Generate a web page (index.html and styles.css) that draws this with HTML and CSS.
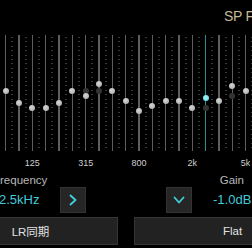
FILE: index.html
```html
<!DOCTYPE html>
<html>
<head>
<meta charset="utf-8">
<link rel="stylesheet" href="styles.css">
</head>
<body>
<div class="screen">
  <header class="header"><span class="title">SP Flat</span></header>
  <div class="eq">
    <div class="band"><span class="knob" style="top:56px"></span></div>
    <div class="band"><span class="knob" style="top:68px"></span></div>
    <div class="band"><span class="knob" style="top:73px"></span></div>
    <div class="band"><span class="knob" style="top:73px"></span></div>
    <div class="band"><span class="knob" style="top:68px"></span></div>
    <div class="band"><span class="knob" style="top:56px"></span></div>
    <div class="band"><span class="ghost" style="top:56px"></span><span class="knob" style="top:61px"></span></div>
    <div class="band"><span class="ghost" style="top:56px"></span><span class="knob" style="top:49px"></span></div>
    <div class="band"><span class="knob" style="top:56px"></span></div>
    <div class="band"><span class="knob" style="top:66px"></span></div>
    <div class="band"><span class="knob" style="top:76px"></span></div>
    <div class="band"><span class="knob" style="top:71px"></span></div>
    <div class="band"><span class="knob" style="top:66px"></span></div>
    <div class="band"><span class="knob" style="top:66px"></span></div>
    <div class="band"><span class="knob" style="top:73px"></span></div>
    <div class="band selected"><span class="ghost" style="top:73px"></span><span class="knob" style="top:63px"></span></div>
    <div class="band"><span class="knob" style="top:66px"></span></div>
    <div class="band"><span class="ghost" style="top:61px"></span><span class="knob" style="top:51px"></span></div>
    <div class="band"><span class="knob" style="top:56px"></span></div>
    <div class="band"><span class="knob" style="top:60px"></span></div>
  </div>
  <div class="freqs">
    <span class="freq"></span><span class="freq"></span><span class="freq">125</span><span class="freq"></span>
    <span class="freq"></span><span class="freq"></span><span class="freq">315</span><span class="freq"></span>
    <span class="freq"></span><span class="freq"></span><span class="freq">800</span><span class="freq"></span>
    <span class="freq"></span><span class="freq"></span><span class="freq">2k</span><span class="freq"></span>
    <span class="freq"></span><span class="freq"></span><span class="freq">5k</span><span class="freq"></span>
  </div>
  <div class="params-labels">
    <span class="plabel freq-label">Frequency</span>
    <span class="plabel gain-label">Gain</span>
  </div>
  <div class="params-values">
    <span class="pvalue freq-value">2.5kHz</span>
    <button class="icon-btn next-btn" aria-label="next">
      <svg width="12" height="12" viewBox="0 0 12 12"><path d="M3.5 1.5 L8.5 6 L3.5 10.5" fill="none" stroke="#3fd0e0" stroke-width="1.8" stroke-linecap="round" stroke-linejoin="round"/></svg>
    </button>
    <button class="icon-btn down-btn" aria-label="down">
      <svg width="12" height="12" viewBox="0 0 12 12"><path d="M1.5 3.5 L6 8.5 L10.5 3.5" fill="none" stroke="#3fd0e0" stroke-width="1.8" stroke-linecap="round" stroke-linejoin="round"/></svg>
    </button>
    <span class="pvalue gain-value">-1.0dB</span>
  </div>
  <div class="actions">
    <button class="action lr">LR同期</button>
    <button class="action flat">Flat</button>
  </div>
</div>
</body>
</html>
```
FILE: styles.css
```css
html, body {
  margin: 0;
  padding: 0;
  background: #000;
}
body {
  width: 252px;
  height: 248px;
  overflow: hidden;
  font-family: "Liberation Sans", Roboto, "Noto Sans CJK JP", sans-serif;
}
.screen {
  width: 252px;
  height: 248px;
  overflow: hidden;
}
.header {
  height: 35px;
  padding-left: 224px;
  white-space: nowrap;
  box-sizing: border-box;
  padding-top: 7px;
}
.title {
  color: #c8b996;
  font-size: 14px;
  line-height: 18px;
  letter-spacing: -0.3px;
}
.eq {
  display: flex;
  height: 116px;
  margin-left: -1px;
}
.band {
  position: relative;
  flex: 0 0 13.333px;
  min-width: 0;
  height: 116px;
}
.band::before {
  content: "";
  position: absolute;
  left: 6px;
  top: 0;
  bottom: 0;
  width: 1.4px;
  background: #5e5e5e;
}
.band::after {
  content: "";
  position: absolute;
  right: -1px;
  top: 2px;
  bottom: 0;
  width: 2px;
  background: repeating-linear-gradient(to bottom, #3a3a3a 0 1px, transparent 1px 4.4px);
}
.band.selected::before {
  background: #2a8e96;
}
.knob, .ghost {
  position: absolute;
  left: 3.7px;
  width: 6px;
  height: 6px;
  margin-top: -3px;
  border-radius: 50%;
  z-index: 2;
}
.knob {
  background: radial-gradient(circle at 40% 35%, #d4d4d4, #a8a8a8);
}
.ghost {
  background: #333;
  z-index: 1;
}
.selected .knob {
  background: radial-gradient(circle at 40% 35%, #9ff0f6, #5fd6e4);
}
.freqs {
  display: flex;
  margin-left: -1px;
  height: 23px;
  padding-top: 6px;
  box-sizing: border-box;
}
.freq {
  flex: 0 0 13.333px;
  min-width: 0;
  display: flex;
  justify-content: center;
  white-space: nowrap;
  color: #cfcfcf;
  font-size: 9px;
  line-height: 12px;
}
.params-labels {
  display: flex;
  justify-content: space-between;
  height: 13px;
  white-space: nowrap;
}
.plabel {
  color: #b8b8b8;
  font-size: 11.5px;
  line-height: 13px;
}
.freq-label {
  margin-left: -7px;
}
.gain-label {
  margin-right: 8px;
}
.params-values {
  display: flex;
  align-items: center;
  height: 26px;
  white-space: nowrap;
}
.pvalue {
  color: #43c9d9;
  font-size: 13px;
  line-height: 16px;
}
.freq-value {
  width: 61px;
  margin-left: -1px;
}
.icon-btn {
  width: 26px;
  height: 26px;
  padding: 0;
  border: 1px solid #333;
  background: #262626;
  display: flex;
  align-items: center;
  justify-content: center;
  box-sizing: border-box;
}
.down-btn {
  margin-left: 80px;
}
.gain-value {
  margin-left: 21px;
}
.actions {
  display: flex;
  gap: 16px;
  margin-top: 4px;
  margin-left: -57px;
  height: 28px;
}
.action {
  height: 28px;
  padding: 0;
  border: 1px solid #363636;
  background: #222;
  color: #e2e2e2;
  font-family: "Liberation Sans", "Noto Sans CJK JP", sans-serif;
  font-size: 11.5px;
  flex: none;
}
.lr {
  width: 175px;
}
.flat {
  width: 197px;
}
```
